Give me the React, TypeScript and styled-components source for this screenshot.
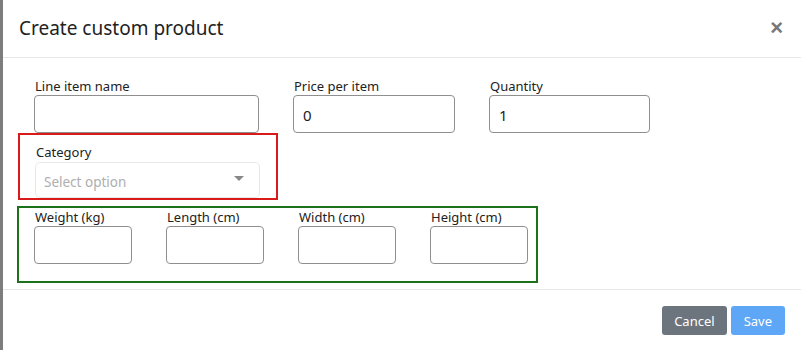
import React from "react";
import styled, { createGlobalStyle } from "styled-components";

const Global = createGlobalStyle`
  html, body { margin: 0; padding: 0; background: #fff; }
  body { font-family: "Noto Sans", "Open Sans", sans-serif; color: #212529; }
  * { box-sizing: border-box; }
`;

const Page = styled.div`
  display: flex;
  width: 801px;
  height: 350px;
  overflow: hidden;
`;

const Backdrop = styled.div`
  width: 3px;
  flex: none;
  background: #7d7d7d;
`;

const Modal = styled.div`
  flex: 1;
  background: #fff;
  display: flex;
  flex-direction: column;
`;

const Header = styled.div`
  height: 58px;
  display: flex;
  align-items: center;
  justify-content: space-between;
  padding: 0 18px 2px 16px;
  border-bottom: 1px solid #e6e6e6;
`;

const Title = styled.h5`
  margin: 0;
  font-size: 19px;
  font-weight: 400;
  color: #222;
`;

const Close = styled.button`
  border: none;
  background: none;
  padding: 0;
  font-size: 22px;
  font-weight: 700;
  line-height: 1;
  color: #777;
  font-family: "Liberation Sans", sans-serif;
`;

const Body = styled.div`
  padding: 19px 0 6px 14px;
  display: flex;
  flex-direction: column;
  border-bottom: 1px solid #e6e6e6;
`;

const Row = styled.div`
  display: flex;
  gap: 34px;
  padding-left: 17px;
`;

const Field = styled.div<{ $w: number }>`
  width: ${(p) => p.$w}px;
  display: flex;
  flex-direction: column;
`;

const Label = styled.label`
  font-size: 13px;
  line-height: 18px;
  color: #222;
  padding-left: 1px;
`;

const Input = styled.div`
  height: 38px;
  border: 1px solid #8f8f8f;
  border-radius: 4px;
  font-size: 15px;
  display: flex;
  align-items: center;
  padding: 2px 9px 0;
  color: #222;
`;

const RedBox = styled.div`
  width: 260px;
  height: 67px;
  border: 2px solid #d81a1a;
  margin: 0 0 0 1px;
  padding: 8px 0 0 15px;
  display: flex;
  flex-direction: column;
`;

const Select = styled.div`
  width: 225px;
  height: 36px;
  margin-top: 1px;
  border: 1px solid #e8e8e8;
  border-radius: 5px;
  display: flex;
  align-items: center;
  justify-content: space-between;
  padding: 3px 15px 0 8px;
  font-size: 13.5px;
  color: #aeaeae;
`;

const Caret = styled.span`
  width: 0;
  height: 0;
  border-left: 5px solid transparent;
  border-right: 5px solid transparent;
  border-top: 5px solid #888;
  margin-top: -7px;
`;

const GreenBox = styled.div`
  width: 521px;
  height: 77px;
  border: 2px solid #1b721b;
  margin-top: 6px;
  padding: 0 0 0 15px;
  display: flex;
  gap: 34px;
`;

const Footer = styled.div`
  display: flex;
  justify-content: flex-end;
  gap: 4px;
  padding: 16px 16px 0 0;
`;

const Button = styled.button<{ $variant: "secondary" | "primary" }>`
  height: 29px;
  border: none;
  border-radius: 3px;
  font-family: "Noto Sans", "Open Sans", sans-serif;
  font-size: 13px;
  color: #fff;
  padding: 0 ${(p) => (p.$variant === "secondary" ? 12 : 13)}px;
  background: ${(p) => (p.$variant === "secondary" ? "#6c757d" : "#5ea7f6")};
`;

const dims = ["Weight (kg)", "Length (cm)", "Width (cm)", "Height (cm)"];

export default function App() {
  return (
    <Page>
      <Global />
      <Backdrop />
      <Modal>
        <Header>
          <Title>Create custom product</Title>
          <Close>×</Close>
        </Header>
        <Body>
          <Row>
            <Field $w={225}>
              <Label>Line item name</Label>
              <Input />
            </Field>
            <Field $w={162}>
              <Label>Price per item</Label>
              <Input>0</Input>
            </Field>
            <Field $w={161}>
              <Label>Quantity</Label>
              <Input>1</Input>
            </Field>
          </Row>
          <RedBox>
            <Label>Category</Label>
            <Select>
              <span>Select option</span>
              <Caret />
            </Select>
          </RedBox>
          <GreenBox>
            {dims.map((d) => (
              <Field key={d} $w={98}>
                <Label>{d}</Label>
                <Input />
              </Field>
            ))}
          </GreenBox>
        </Body>
        <Footer>
          <Button $variant="secondary">Cancel</Button>
          <Button $variant="primary">Save</Button>
        </Footer>
      </Modal>
    </Page>
  );
}
